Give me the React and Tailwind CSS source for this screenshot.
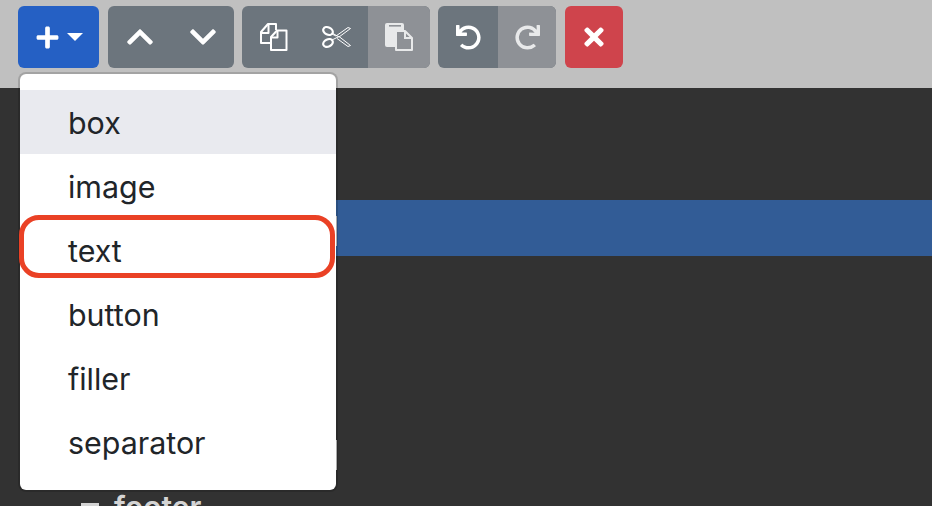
import React from "react";
import { FaPlus, FaChevronUp, FaChevronDown, FaUndo, FaRedo, FaTimes } from "react-icons/fa";

function CopyIcon() {
  return (
    <svg width="29" height="28" viewBox="0 0 29 28" fill="none" stroke="white" strokeWidth="2" strokeLinejoin="round">
      <path d="M11 20H2V9L9 1H17V7" />
      <path d="M2 10H9.5V1" />
      <path d="M12 27V14L18 7.5H27.5V27Z" />
      <path d="M12 14.5H18.5V7.5" />
    </svg>
  );
}

function ScissorsIcon() {
  return (
    <svg width="29" height="22" viewBox="0 0 29 22" fill="none" stroke="white" strokeLinejoin="round">
      <ellipse cx="6" cy="5" rx="5" ry="3.6" transform="rotate(25 6 5)" strokeWidth="2.2" />
      <ellipse cx="6" cy="17" rx="5" ry="3.6" transform="rotate(-25 6 17)" strokeWidth="2.2" />
      <path d="M10 8L14 10L26 1.5L28.5 2.5L17 11L11 7.5" strokeWidth="1" />
      <path d="M10 14L14 12L17 10.5L28.5 19.5L26 20.5L15 12.5" strokeWidth="1" />
    </svg>
  );
}

function PasteIcon() {
  return (
    <svg width="28" height="28" viewBox="0 0 28 28">
      <rect x="0" y="0" width="19" height="24" rx="2" fill="#e8e9ea" />
      <rect x="4" y="2" width="12" height="1.6" fill="#8e9196" />
      <path d="M11 8H20L27 15V27H11Z" fill="#8e9196" stroke="#e8e9ea" strokeWidth="2" strokeLinejoin="round" />
      <path d="M20 8V15H27" fill="none" stroke="#e8e9ea" strokeWidth="2" />
    </svg>
  );
}

const items = ["box", "image", "text", "button", "filler", "separator"];

export default function App() {
  return (
    <div className="relative h-[506px] w-[932px] overflow-hidden bg-[#323232] font-['Inter',sans-serif]">
      <header className="flex h-[88px] items-start gap-2 bg-[#c0c0c0] pl-[18px] pt-[6px]">
        <button className="mr-px flex h-[62px] w-[81px] items-center justify-center gap-[7px] rounded-[6px] bg-[#2560c4] text-white">
          <FaPlus size={25} />
          <span className="h-0 w-0 border-x-[8px] border-t-[8px] border-x-transparent border-t-white" />
        </button>
        <div className="flex h-[62px] w-[126px] overflow-hidden rounded-[6px] bg-[#6c757d] text-white">
          <span className="flex w-[63px] items-center justify-center"><FaChevronUp size={30} /></span>
          <span className="flex w-[63px] items-center justify-center"><FaChevronDown size={30} /></span>
        </div>
        <div className="flex h-[62px] w-[188px] overflow-hidden rounded-[6px] bg-[#6c757d]">
          <span className="flex w-[63px] items-center justify-center"><CopyIcon /></span>
          <span className="flex w-[63px] items-center justify-center"><ScissorsIcon /></span>
          <span className="flex w-[62px] items-center justify-center bg-[#8e9196]"><PasteIcon /></span>
        </div>
        <div className="mr-px flex h-[62px] w-[118px] overflow-hidden rounded-[6px] bg-[#6c757d] text-white">
          <span className="flex w-[60px] items-center justify-center"><FaUndo size={25} /></span>
          <span className="flex w-[58px] items-center justify-center bg-[#8e9196] text-[#e8e9ea]"><FaRedo size={25} /></span>
        </div>
        <button className="flex h-[62px] w-[58px] items-center justify-center rounded-[6px] bg-[#cf444c] text-white">
          <FaTimes size={28} />
        </button>
      </header>

      <main className="relative pt-[112px]">
        <div className="ml-[336px] h-[56px] bg-[#325c96]" />
        <p className="ml-[114px] mt-[235px] text-[30px] font-semibold leading-[32px] text-[#d4d4d4]">footer</p>
        <span className="absolute left-[81px] top-[415px] h-[4px] w-[18px] bg-[#d4d4d4]" />
        <span className="absolute left-[336px] top-[128px] h-[30px] w-px bg-[#c8c8c8]" />
        <span className="absolute left-[336px] top-[352px] h-[30px] w-px bg-[#c8c8c8]" />
      </main>

      <nav className="absolute left-[18px] top-[72px] h-[420px] w-[320px] rounded-[8px] border-2 border-black/15 bg-white bg-clip-padding pt-[16px] text-[30.4px] text-[#212529]">
        <ul>
          {items.map((item, index) => (
            <li key={item} className={index === 0 ? "h-[64px] bg-[#e9eaef] pl-[48px] leading-[66px]" : "h-[64px] pl-[48px] leading-[66px]"}>{item}</li>
          ))}
        </ul>
      </nav>

      <div className="absolute left-[19px] top-[215px] h-[63px] w-[316px] rounded-[20px] border-[5px] border-[#ea4125]" />
    </div>
  );
}
